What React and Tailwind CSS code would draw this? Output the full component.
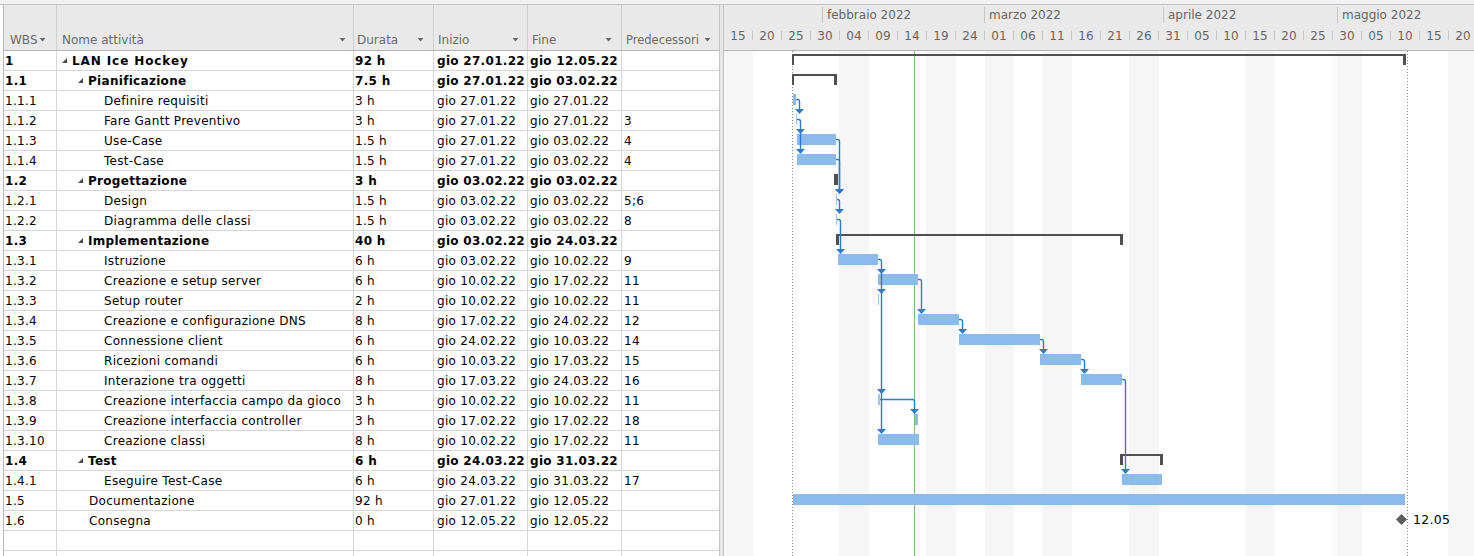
import React from 'react';

const rows = [
  { wbs: '1', name: 'LAN Ice Hockey', lvl: 0, sum: true, dur: '92 h', s: 'gio 27.01.22', e: 'gio 12.05.22', p: '' },
  { wbs: '1.1', name: 'Pianificazione', lvl: 1, sum: true, dur: '7.5 h', s: 'gio 27.01.22', e: 'gio 03.02.22', p: '' },
  { wbs: '1.1.1', name: 'Definire requisiti', lvl: 2, dur: '3 h', s: 'gio 27.01.22', e: 'gio 27.01.22', p: '' },
  { wbs: '1.1.2', name: 'Fare Gantt Preventivo', lvl: 2, dur: '3 h', s: 'gio 27.01.22', e: 'gio 27.01.22', p: '3' },
  { wbs: '1.1.3', name: 'Use-Case', lvl: 2, dur: '1.5 h', s: 'gio 27.01.22', e: 'gio 03.02.22', p: '4' },
  { wbs: '1.1.4', name: 'Test-Case', lvl: 2, dur: '1.5 h', s: 'gio 27.01.22', e: 'gio 03.02.22', p: '4' },
  { wbs: '1.2', name: 'Progettazione', lvl: 1, sum: true, dur: '3 h', s: 'gio 03.02.22', e: 'gio 03.02.22', p: '' },
  { wbs: '1.2.1', name: 'Design', lvl: 2, dur: '1.5 h', s: 'gio 03.02.22', e: 'gio 03.02.22', p: '5;6' },
  { wbs: '1.2.2', name: 'Diagramma delle classi', lvl: 2, dur: '1.5 h', s: 'gio 03.02.22', e: 'gio 03.02.22', p: '8' },
  { wbs: '1.3', name: 'Implementazione', lvl: 1, sum: true, dur: '40 h', s: 'gio 03.02.22', e: 'gio 24.03.22', p: '' },
  { wbs: '1.3.1', name: 'Istruzione', lvl: 2, dur: '6 h', s: 'gio 03.02.22', e: 'gio 10.02.22', p: '9' },
  { wbs: '1.3.2', name: 'Creazione e setup server', lvl: 2, dur: '6 h', s: 'gio 10.02.22', e: 'gio 17.02.22', p: '11' },
  { wbs: '1.3.3', name: 'Setup router', lvl: 2, dur: '2 h', s: 'gio 10.02.22', e: 'gio 10.02.22', p: '11' },
  { wbs: '1.3.4', name: 'Creazione e configurazione DNS', lvl: 2, dur: '8 h', s: 'gio 17.02.22', e: 'gio 24.02.22', p: '12' },
  { wbs: '1.3.5', name: 'Connessione client', lvl: 2, dur: '6 h', s: 'gio 24.02.22', e: 'gio 10.03.22', p: '14' },
  { wbs: '1.3.6', name: 'Ricezioni comandi', lvl: 2, dur: '6 h', s: 'gio 10.03.22', e: 'gio 17.03.22', p: '15' },
  { wbs: '1.3.7', name: 'Interazione tra oggetti', lvl: 2, dur: '8 h', s: 'gio 17.03.22', e: 'gio 24.03.22', p: '16' },
  { wbs: '1.3.8', name: 'Creazione interfaccia campo da gioco', lvl: 2, dur: '3 h', s: 'gio 10.02.22', e: 'gio 10.02.22', p: '11' },
  { wbs: '1.3.9', name: 'Creazione interfaccia controller', lvl: 2, dur: '3 h', s: 'gio 17.02.22', e: 'gio 17.02.22', p: '18' },
  { wbs: '1.3.10', name: 'Creazione classi', lvl: 2, dur: '8 h', s: 'gio 10.02.22', e: 'gio 17.02.22', p: '11' },
  { wbs: '1.4', name: 'Test', lvl: 1, sum: true, dur: '6 h', s: 'gio 24.03.22', e: 'gio 31.03.22', p: '' },
  { wbs: '1.4.1', name: 'Eseguire Test-Case', lvl: 2, dur: '6 h', s: 'gio 24.03.22', e: 'gio 31.03.22', p: '17' },
  { wbs: '1.5', name: 'Documentazione', lvl: 1, dur: '92 h', s: 'gio 27.01.22', e: 'gio 12.05.22', p: '' },
  { wbs: '1.6', name: 'Consegna', lvl: 1, dur: '0 h', s: 'gio 12.05.22', e: 'gio 12.05.22', p: '' },
  null,
  null,
];

const days = ['15', '20', '25', '30', '04', '09', '14', '19', '24', '01', '06', '11', '16', '21', '26', '31', '05', '10', '15', '20', '25', '30', '05', '10', '15', '20'];

const BAR = '#8bbbec';
const SUM = '#505050';
const LINK = '#2b7bd5';

function DropArrow() {
  return (
    <svg width="7" height="4" className="mb-[5px] shrink-0">
      <polygon points="0.5,0 6.5,0 3.5,3.5" fill="#6a6a6a" />
    </svg>
  );
}

function Tri() {
  return (
    <svg width="5" height="5" className="shrink-0">
      <polygon points="5,0 5,5 0,5" fill="#4a4a4a" />
    </svg>
  );
}

function Row({ r }) {
  const b = r && r.sum ? 'font-bold' : '';
  const cell = 'shrink-0 h-full flex items-center whitespace-nowrap overflow-hidden';
  return (
    <div className={`flex h-[20px] border-b border-[#d6d6d6] ${b}`}>
      <div className={`${cell} w-[53px] pl-[1px] border-r border-[#d6d6d6]`}>{r ? r.wbs : ''}</div>
      <div className={`${cell} w-[297px] border-r border-[#d6d6d6]`}>
        {r && r.sum && r.lvl === 0 && (
          <div className="flex items-center pl-[5px] gap-[5px]"><Tri /><span className="tracking-[0.9px]">{r.name}</span></div>
        )}
        {r && r.sum && r.lvl === 1 && (
          <div className="flex items-center pl-[21px] gap-[5px]"><Tri /><span>{r.name}</span></div>
        )}
        {r && !r.sum && r.lvl === 1 && <span className="pl-[32px]">{r.name}</span>}
        {r && !r.sum && r.lvl === 2 && <span className="pl-[47px]">{r.name}</span>}
      </div>
      <div className={`${cell} w-[80px] pl-[1px] border-r border-[#d6d6d6]`}>{r ? r.dur : ''}</div>
      <div className={`${cell} w-[94px] pl-[3px] border-r border-[#d6d6d6]`}>{r ? r.s : ''}</div>
      <div className={`${cell} w-[94px] pl-[2px] border-r border-[#d6d6d6]`}>{r ? r.e : ''}</div>
      <div className={`${cell} w-[97px] pl-[2px]`}>{r ? r.p : ''}</div>
    </div>
  );
}

const bands = [
  [724, 29], [839, 30], [926, 30], [985, 29], [1042, 30], [1129, 30], [1245, 30], [1337, 25], [1448, 30],
];

// task bars: [x, width, rowIndex, thin]
const bars = [
  [793, 3, 2], [796, 1, 3, true], [797, 39, 4], [797, 39, 5],
  [836, 1, 7, true], [836, 1, 8, true], [838, 40, 10], [878, 40, 11], [878, 1, 12, true],
  [918, 41, 13], [959, 81, 14], [1040, 41, 15], [1081, 41, 16], [878, 2, 17, true],
  [915, 3, 18], [878, 41, 19], [1122, 40, 21], [793, 612, 22],
];

// summary: [x1, x2, row, leftCapW, rightCapW]
const sums = [
  [792, 1406, 0, 2, 3],
  [792, 837, 1, 2, 3],
  [836, 1123, 9, 3, 3],
  [1120, 1163, 20, 3, 3],
];

const links = [
  [796, 99.5, 799.5, [114]],
  [797, 119.5, 800.5, [134, 154]],
  [836, 139.5, 839.5, [194]],
  [836, 159.5, 839.5, [194]],
  [837, 199.5, 839.5, [214]],
  [837, 219.5, 840.5, [254]],
  [878, 259.5, 881.5, [274, 294, 394, 434]],
  [918, 279.5, 921.5, [314]],
  [959, 319.5, 962.5, [334]],
  [1040, 339.5, 1043.5, [354]],
  [1081, 359.5, 1084.5, [374]],
  [1122, 379.5, 1125.5, [474]],
  [880, 399.5, 914.5, [414]],
];

function GanttBody() {
  return (
    <svg width="750" height="505" className="block">
      <g transform="translate(-724,-51)">
        {bands.map(([x, w], i) => (
          <rect key={i} x={x} y={51} width={w} height={505} fill="#f6f6f6" />
        ))}
        <rect x={1332} y={51} width={5} height={505} fill="#fafafa" />
        <line x1={792.5} y1={51} x2={792.5} y2={556} stroke="#8a8a8a" strokeDasharray="1 2" />
        <line x1={1407.5} y1={51} x2={1407.5} y2={556} stroke="#8a8a8a" strokeDasharray="1 2" />
        <line x1={914.5} y1={51} x2={914.5} y2={556} stroke="#7fbf7a" />
        {sums.map(([x1, x2, r, lw, rw], i) => {
          const top = 54 + 20 * r;
          return (
            <g key={i} fill={SUM} shapeRendering="crispEdges">
              <rect x={x1} y={top} width={x2 - x1} height={2} />
              <rect x={x1} y={top} width={lw} height={11} />
              <rect x={x2 - rw} y={top} width={rw} height={11} />
            </g>
          );
        })}
        <rect x={834} y={174} width={4} height={11} fill={SUM} shapeRendering="crispEdges" />
        {bars.map(([x, w, r, thin], i) => (
          <rect key={i} x={x} y={54 + 20 * r} width={w} height={11} fill={thin ? '#9cc5f0' : BAR} shapeRendering="crispEdges" />
        ))}
        {links.map(([x0, y0, vx, tips], i) => {
          const last = tips[tips.length - 1];
          return (
            <g key={i}>
              <path d={`M${x0} ${y0} H${vx - 2} Q${vx} ${y0} ${vx} ${y0 + 2} V${last - 5}`} fill="none" stroke={LINK} strokeWidth="1.4" />
              {tips.map((t, j) => (
                <polygon key={j} points={`${vx - 4.5},${t - 5} ${vx + 4.5},${t - 5} ${vx},${t}`} fill={LINK} />
              ))}
            </g>
          );
        })}
        <polygon points="1401.5,514 1407,519.5 1401.5,525 1396,519.5" fill="#5c5c5c" />
      </g>
    </svg>
  );
}

export default function App() {
  return (
    <div className="w-[1474px] h-[556px] overflow-hidden bg-white font-['DejaVu_Sans',sans-serif] text-[12px] tracking-[0.3px] text-black">
      <div className="h-[5px] bg-[#f2f2f2] border-b border-[#c4c4c4]" />
      <div className="flex h-[551px]">
        {/* table */}
        <div className="ml-[3px] w-[716px] shrink-0 border-l border-[#b9b9b9] flex flex-col">
          <div className="flex h-[46px] bg-[#e9e9e9] border-b border-[#b4b4b4] shrink-0 tracking-normal text-[#6b6b6b]">
            <div className="w-[53px] shrink-0 h-full flex items-end justify-between pb-[3px] pl-[6px] pr-[10px] border-r border-[#cfcfcf]">
              <span className="leading-[14px]">WBS</span>
              <DropArrow />
            </div>
            <div className="w-[297px] shrink-0 h-full flex items-end justify-between pb-[3px] pl-[5px] pr-[7px] border-r border-[#cfcfcf]">
              <span className="leading-[14px]">Nome attività</span>
              <DropArrow />
            </div>
            <div className="w-[80px] shrink-0 h-full flex items-end justify-between pb-[3px] pl-[3px] pr-[9px] border-r border-[#cfcfcf]">
              <span className="leading-[14px]">Durata</span>
              <DropArrow />
            </div>
            <div className="w-[94px] shrink-0 h-full flex items-end justify-between pb-[3px] pl-[4px] pr-[8px] border-r border-[#cfcfcf]">
              <span className="leading-[14px]">Inizio</span>
              <DropArrow />
            </div>
            <div className="w-[94px] shrink-0 h-full flex items-end justify-between pb-[3px] pl-[4px] pr-[9px] border-r border-[#cfcfcf]">
              <span className="leading-[14px]">Fine</span>
              <DropArrow />
            </div>
            <div className="w-[97px] shrink-0 h-full flex items-end justify-between pb-[3px] pl-[4px] pr-[8px]">
              <span className="leading-[14px] whitespace-nowrap text-[11.5px]">Predecessori</span>
              <DropArrow />
            </div>
          </div>
          <div className="flex flex-col">
            {rows.map((r, i) => (
              <Row key={i} r={r} />
            ))}
          </div>
        </div>
        {/* divider */}
        <div className="w-[5px] shrink-0 bg-[#e6e6e6] border-l border-r border-[#c4c4c4]" />
        {/* gantt */}
        <div className="flex-1 flex flex-col overflow-hidden">
          <div className="h-[46px] shrink-0 bg-[#e9e9e9] border-b border-[#b4b4b4] flex flex-col text-[#666666] tracking-normal">
            <div className="h-[20px] flex whitespace-nowrap">
              <div className="w-[98px] shrink-0" />
              <div className="w-[162px] shrink-0 flex items-center">
                <div className="w-px h-[16px] bg-[#c6c6c6]" />
                <span className="ml-[4px]">febbraio 2022</span>
              </div>
              <div className="w-[179px] shrink-0 flex items-center">
                <div className="w-px h-[16px] bg-[#c6c6c6]" />
                <span className="ml-[4px]">marzo 2022</span>
              </div>
              <div className="w-[174px] shrink-0 flex items-center">
                <div className="w-px h-[16px] bg-[#c6c6c6]" />
                <span className="ml-[4px]">aprile 2022</span>
              </div>
              <div className="flex-1 flex items-center">
                <div className="w-px h-[16px] bg-[#c6c6c6]" />
                <span className="ml-[4px]">maggio 2022</span>
              </div>
            </div>
            <div className="h-[25px] flex items-center pb-[4px]">
              {days.map((d, i) => (
                <div key={i} className="w-[29px] shrink-0 flex items-center">
                  <span className="flex-1 text-center">{d}</span>
                  <div className="w-px h-[9px] bg-[#c6c6c6]" />
                </div>
              ))}
            </div>
          </div>
          <div className="relative flex-1">
            <GanttBody />
            <span className="absolute left-[689px] top-[461px] leading-[15px] text-[12.5px] text-black">12.05</span>
          </div>
        </div>
      </div>
    </div>
  );
}
